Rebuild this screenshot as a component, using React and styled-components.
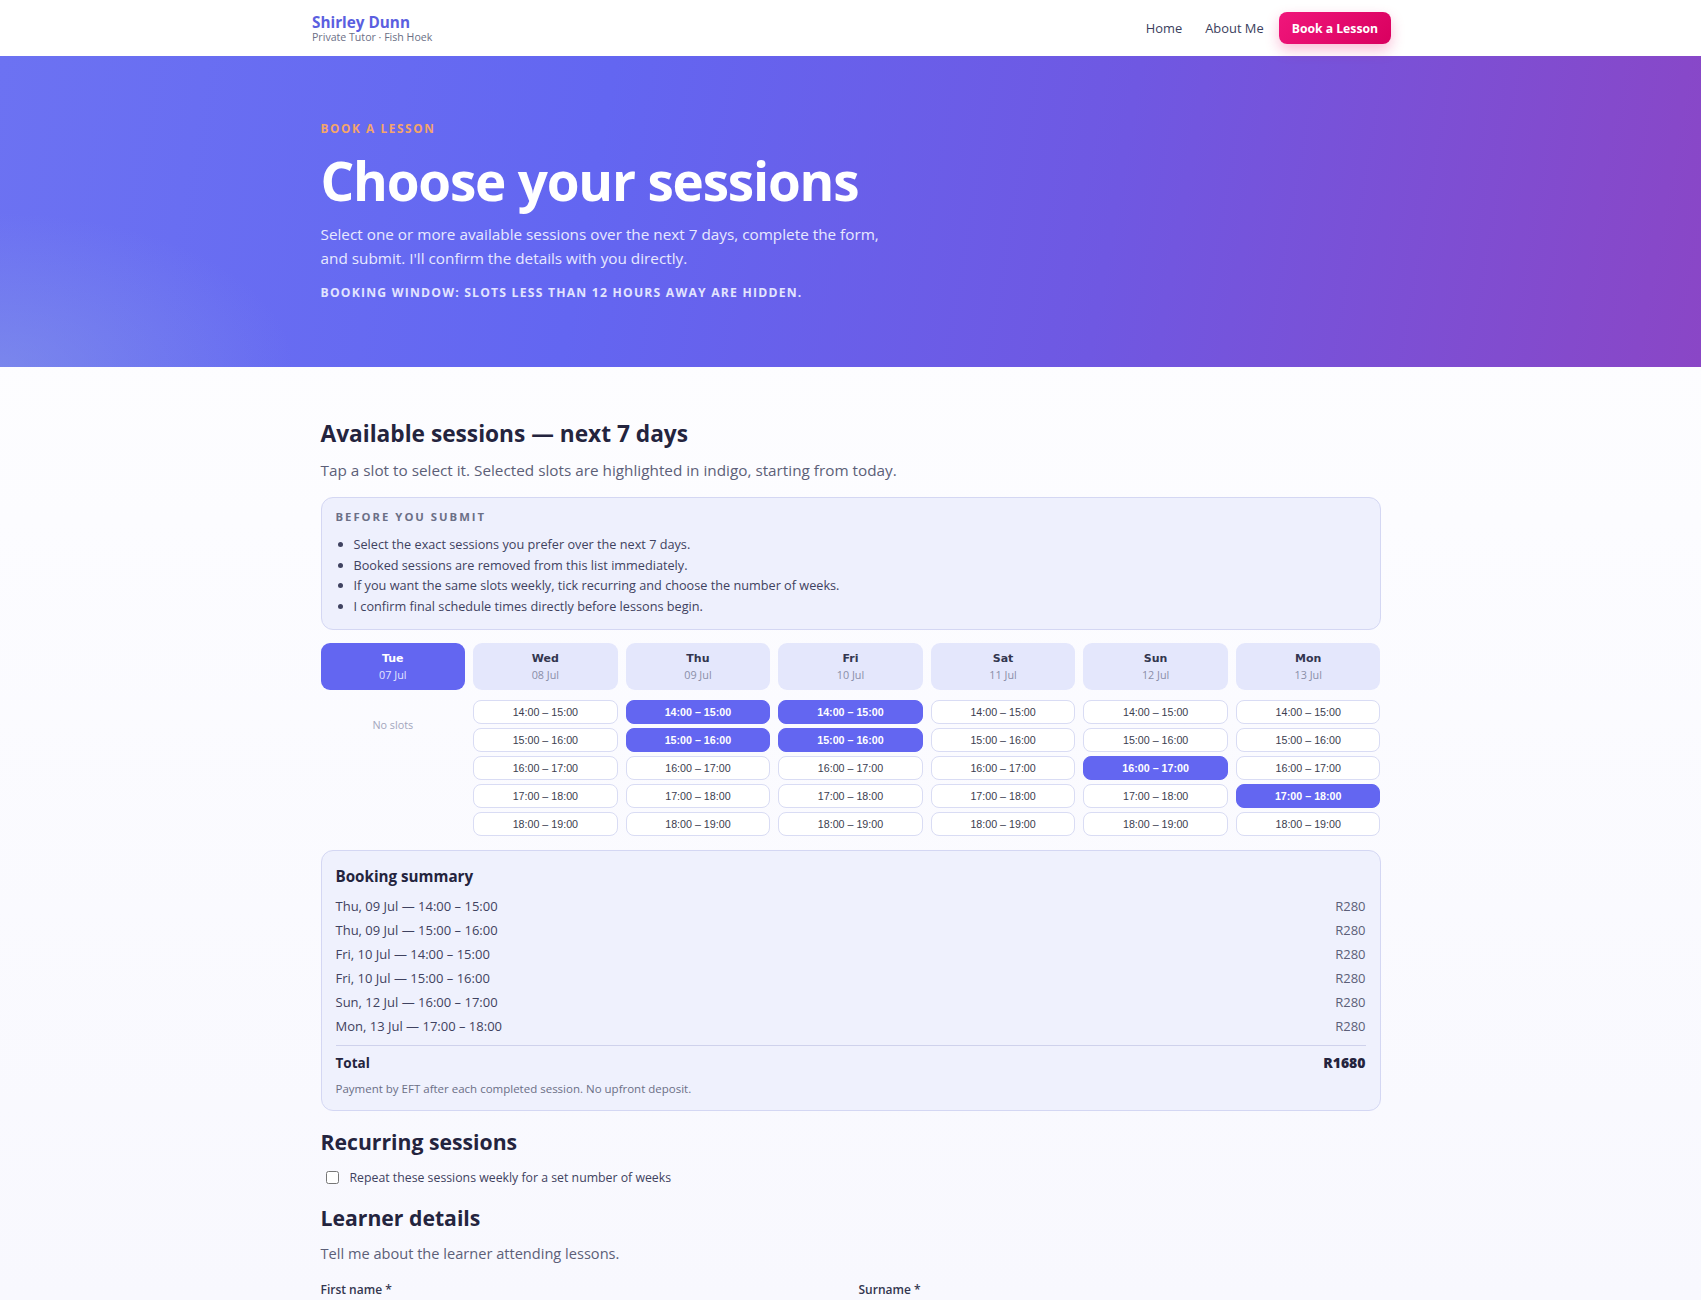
import React from "react";
import styled, { createGlobalStyle } from "styled-components";

const GlobalStyle = createGlobalStyle`
  * { box-sizing: border-box; }
  html, body { margin: 0; padding: 0; }
  body {
    font-family: "Open Sans", "Noto Sans", sans-serif;
    color: #24243e;
    background: linear-gradient(180deg, #ffffff 0%, #fcfcff 40%, #f8f8fe 100%);
    min-height: 1300px;
  }
`;

const Nav = styled.header`
  height: 56px;
  background: #ffffff;
  display: flex;
  justify-content: center;
`;

const NavInner = styled.div`
  width: 1079px;
  margin-left: 2px;
  display: flex;
  align-items: center;
  justify-content: space-between;
`;

const Brand = styled.div`
  display: flex;
  flex-direction: column;
  padding-top: 1px;
`;

const BrandName = styled.div`
  font-size: 15.3px;
  font-weight: 700;
  color: #5b5fe0;
  line-height: 18px;
`;

const BrandSub = styled.div`
  font-size: 10.6px;
  color: #6b6f86;
  line-height: 13px;
`;

const NavLinks = styled.nav`
  display: flex;
  align-items: center;
  gap: 15px;
`;

const NavLink = styled.a`
  font-size: 12.9px;
  font-weight: 500;
  color: #3a3d5c;
  text-decoration: none;
  margin-right: ${(p) => (p.$extra ? 8 : 0)}px;
`;

const CTA = styled.a`
  height: 32px;
  padding: 0 13px;
  display: inline-flex;
  align-items: center;
  border-radius: 8px;
  background: linear-gradient(135deg, #f0167b 0%, #d9005f 100%);
  color: #fff;
  font-size: 12.2px;
  font-weight: 700;
  text-decoration: none;
  box-shadow: 0 6px 14px rgba(236, 20, 110, 0.28);
`;

const Hero = styled.section`
  height: 311px;
  background:
    radial-gradient(ellipse 420px 220px at 0% 100%, rgba(140, 160, 230, 0.45), rgba(140, 160, 230, 0) 70%),
    linear-gradient(100deg, #6c72f2 0%, #6366f1 35%, #6f58e2 65%, #8a46c6 100%);
  display: flex;
  justify-content: center;
`;

const HeroInner = styled.div`
  width: 1060px;
  padding-top: 63px;
`;

const Eyebrow = styled.div`
  font-size: 11.8px;
  line-height: 18px;
  font-weight: 700;
  letter-spacing: 1.6px;
  color: #f4a56a;
  text-transform: uppercase;
`;

const HeroTitle = styled.h1`
  margin: 13px 0 0;
  font-size: 53px;
  line-height: 62px;
  font-weight: 700;
  color: #ffffff;
  letter-spacing: -1.2px;
`;

const HeroText = styled.p`
  margin: 10px 0 0;
  max-width: 575px;
  font-size: 15.3px;
  line-height: 24px;
  color: #e8e9ff;
`;

const HeroNote = styled.div`
  margin-top: 14px;
  font-size: 12.2px;
  line-height: 18px;
  font-weight: 700;
  letter-spacing: 1.2px;
  color: #e2e4ff;
  text-transform: uppercase;
`;

const Main = styled.main`
  width: 1060px;
  margin: 0 auto;
  padding-top: 51px;
`;

const H2 = styled.h2`
  margin: 0;
  font-size: 22.7px;
  line-height: 32px;
  font-weight: 700;
  color: #24243e;
`;

const H3 = styled.h3`
  margin: ${(p) => p.$mt || 0}px 0 0;
  font-size: 21.2px;
  line-height: 30px;
  font-weight: 700;
  color: #24243e;
`;

const Lead = styled.p`
  margin: 8px 0 0;
  font-size: ${(p) => (p.$small ? 14.6 : 15.3)}px;
  line-height: 24px;
  color: #5c5f78;
`;

const InfoBox = styled.div`
  margin-top: 15px;
  background: #eef0fd;
  border: 1px solid #d4d7f3;
  border-radius: 12px;
  padding: 11px 14px 12px;
`;

const InfoTitle = styled.div`
  font-size: 11.3px;
  line-height: 16px;
  font-weight: 700;
  letter-spacing: 2px;
  color: #6b6f86;
  text-transform: uppercase;
`;

const InfoList = styled.ul`
  margin: 9px 0 0;
  padding-left: 18px;
  list-style: disc;
`;

const InfoItem = styled.li`
  font-size: 12.7px;
  line-height: 20.7px;
  color: #3f4260;
  &::marker { color: #3f4260; }
`;

const DayGrid = styled.div`
  margin-top: 13px;
  display: grid;
  grid-template-columns: repeat(7, 1fr);
  gap: 8px;
`;

const DayCol = styled.div`
  display: flex;
  flex-direction: column;
`;

const DayHead = styled.div`
  height: 47px;
  border-radius: 9px;
  background: ${(p) => (p.$active ? "#6366f1" : "#e4e7fc")};
  display: flex;
  flex-direction: column;
  align-items: center;
  justify-content: center;
  gap: 1px;
`;

const DayName = styled.div`
  font-family: "DejaVu Sans", Verdana, sans-serif;
  font-size: 11px;
  line-height: 15px;
  font-weight: 700;
  color: ${(p) => (p.$active ? "#ffffff" : "#33364f")};
`;

const DayDate = styled.div`
  font-size: 10.8px;
  line-height: 15px;
  color: ${(p) => (p.$active ? "#e3e5ff" : "#8a8ea8")};
`;

const Slots = styled.div`
  margin-top: 10px;
  display: flex;
  flex-direction: column;
  gap: 4px;
`;

const Slot = styled.button`
  height: 24px;
  border-radius: 8px;
  border: 1px solid ${(p) => (p.$selected ? "#6366f1" : "#d9dcf4")};
  background: ${(p) => (p.$selected ? "#6366f1" : "#ffffff")};
  color: ${(p) => (p.$selected ? "#ffffff" : "#3b3d4f")};
  font-family: "Liberation Sans", Arial, sans-serif;
  font-size: 10.7px;
  font-weight: ${(p) => (p.$selected ? 700 : 400)};
  padding: 0;
  cursor: pointer;
`;

const NoSlots = styled.div`
  margin-top: 27px;
  text-align: center;
  font-size: 10.8px;
  color: #a3a6bd;
`;

const Summary = styled.div`
  margin-top: 14px;
  background: #eff1fd;
  border: 1px solid #d4d7f3;
  border-radius: 12px;
  padding: 14px 14px 13px;
`;

const SummaryTitle = styled.div`
  font-size: 15.2px;
  line-height: 22px;
  font-weight: 700;
  color: #24243e;
`;

const SummaryList = styled.div`
  margin-top: 7px;
  padding-bottom: 7px;
  border-bottom: 1px solid #cfd2ec;
`;

const SummaryRow = styled.div`
  display: flex;
  justify-content: space-between;
  align-items: center;
  height: 24px;
  font-size: 13px;
  color: #3f4260;
`;

const Price = styled.span`
  color: #5c5f78;
`;

const TotalRow = styled.div`
  margin-top: 7px;
  display: flex;
  justify-content: space-between;
  align-items: center;
  height: 20px;
  font-size: 13.5px;
  font-weight: 700;
  color: #24243e;
`;

const TotalValue = styled.span`
  font-size: 14px;
  font-weight: 800;
`;

const PayNote = styled.div`
  margin-top: 8px;
  font-size: 11.5px;
  line-height: 16px;
  color: #6b6f86;
`;

const CheckRow = styled.label`
  margin-top: 11px;
  display: flex;
  align-items: center;
  gap: 11px;
  height: 20px;
  font-size: 12.3px;
  color: #3f4260;
  padding-left: 5px;
`;

const Check = styled.input`
  margin: 0;
  width: 13px;
  height: 13px;
`;

const FormGrid = styled.div`
  margin-top: 16px;
  display: grid;
  grid-template-columns: 1fr 1fr;
  gap: 16px;
`;

const FieldLabel = styled.label`
  font-size: 12px;
  line-height: 18px;
  font-weight: 600;
  color: #33364f;
`;

const days = [
  { name: "Tue", date: "07 Jul", active: true, slots: [] },
  { name: "Wed", date: "08 Jul", slots: [] },
  { name: "Thu", date: "09 Jul", slots: [0, 1] },
  { name: "Fri", date: "10 Jul", slots: [0, 1] },
  { name: "Sat", date: "11 Jul", slots: [] },
  { name: "Sun", date: "12 Jul", slots: [2] },
  { name: "Mon", date: "13 Jul", slots: [3] },
];

const times = ["14:00 – 15:00", "15:00 – 16:00", "16:00 – 17:00", "17:00 – 18:00", "18:00 – 19:00"];

const summary = [
  "Thu, 09 Jul — 14:00 – 15:00",
  "Thu, 09 Jul — 15:00 – 16:00",
  "Fri, 10 Jul — 14:00 – 15:00",
  "Fri, 10 Jul — 15:00 – 16:00",
  "Sun, 12 Jul — 16:00 – 17:00",
  "Mon, 13 Jul — 17:00 – 18:00",
];

export default function App() {
  return (
    <>
      <GlobalStyle />
      <Nav>
        <NavInner>
          <Brand>
            <BrandName>Shirley Dunn</BrandName>
            <BrandSub>Private Tutor · Fish Hoek</BrandSub>
          </Brand>
          <NavLinks>
            <NavLink href="#" $extra>Home</NavLink>
            <NavLink href="#">About Me</NavLink>
            <CTA href="#">Book a Lesson</CTA>
          </NavLinks>
        </NavInner>
      </Nav>

      <Hero>
        <HeroInner>
          <Eyebrow>Book a lesson</Eyebrow>
          <HeroTitle>Choose your sessions</HeroTitle>
          <HeroText>
            Select one or more available sessions over the next 7 days, complete the form, and submit. I'll confirm the details with you directly.
          </HeroText>
          <HeroNote>Booking window: slots less than 12 hours away are hidden.</HeroNote>
        </HeroInner>
      </Hero>

      <Main>
        <H2>Available sessions — next 7 days</H2>
        <Lead>Tap a slot to select it. Selected slots are highlighted in indigo, starting from today.</Lead>

        <InfoBox>
          <InfoTitle>Before you submit</InfoTitle>
          <InfoList>
            <InfoItem>Select the exact sessions you prefer over the next 7 days.</InfoItem>
            <InfoItem>Booked sessions are removed from this list immediately.</InfoItem>
            <InfoItem>If you want the same slots weekly, tick recurring and choose the number of weeks.</InfoItem>
            <InfoItem>I confirm final schedule times directly before lessons begin.</InfoItem>
          </InfoList>
        </InfoBox>

        <DayGrid>
          {days.map((d) => (
            <DayCol key={d.name}>
              <DayHead $active={d.active}>
                <DayName $active={d.active}>{d.name}</DayName>
                <DayDate $active={d.active}>{d.date}</DayDate>
              </DayHead>
              {d.active ? (
                <NoSlots>No slots</NoSlots>
              ) : (
                <Slots>
                  {times.map((t, i) => (
                    <Slot key={t} $selected={d.slots.includes(i)}>{t}</Slot>
                  ))}
                </Slots>
              )}
            </DayCol>
          ))}
        </DayGrid>

        <Summary>
          <SummaryTitle>Booking summary</SummaryTitle>
          <SummaryList>
            {summary.map((s) => (
              <SummaryRow key={s}>
                <span>{s}</span>
                <Price>R280</Price>
              </SummaryRow>
            ))}
          </SummaryList>
          <TotalRow>
            <span>Total</span>
            <TotalValue>R1680</TotalValue>
          </TotalRow>
          <PayNote>Payment by EFT after each completed session. No upfront deposit.</PayNote>
        </Summary>

        <H3 $mt={16}>Recurring sessions</H3>
        <CheckRow>
          <Check type="checkbox" />
          Repeat these sessions weekly for a set number of weeks
        </CheckRow>

        <H3 $mt={15}>Learner details</H3>
        <Lead $small>Tell me about the learner attending lessons.</Lead>
        <FormGrid>
          <FieldLabel>First name *</FieldLabel>
          <FieldLabel>Surname *</FieldLabel>
        </FormGrid>
      </Main>
    </>
  );
}
